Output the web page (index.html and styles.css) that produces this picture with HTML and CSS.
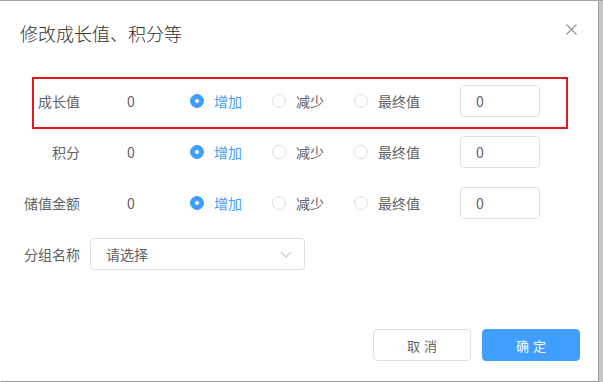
FILE: index.html
```html
<!DOCTYPE html>
<html lang="zh-CN">
<head>
<meta charset="utf-8">
<title>修改成长值、积分等</title>
<link rel="stylesheet" href="styles.css">
</head>
<body>
<div class="dialog">
  <div class="header">
    <span class="title">修改成长值、积分等</span>
    <span class="close">
      <svg width="11" height="11" viewBox="0 0 11 11"><path d="M0.5 0.5 L10.5 10.5 M10.5 0.5 L0.5 10.5" stroke="#909399" stroke-width="1.2" fill="none"/></svg>
    </span>
  </div>
  <div class="body">
    <div class="row">
      <div class="label">成长值</div>
      <div class="value">0</div>
      <div class="radios">
        <span class="radio checked"><span class="dot"></span><span class="rtext">增加</span></span>
        <span class="radio"><span class="dot"></span><span class="rtext">减少</span></span>
        <span class="radio"><span class="dot"></span><span class="rtext">最终值</span></span>
      </div>
      <div class="input">0</div>
    </div>
    <div class="row">
      <div class="label">积分</div>
      <div class="value">0</div>
      <div class="radios">
        <span class="radio checked"><span class="dot"></span><span class="rtext">增加</span></span>
        <span class="radio"><span class="dot"></span><span class="rtext">减少</span></span>
        <span class="radio"><span class="dot"></span><span class="rtext">最终值</span></span>
      </div>
      <div class="input">0</div>
    </div>
    <div class="row">
      <div class="label">储值金额</div>
      <div class="value">0</div>
      <div class="radios">
        <span class="radio checked"><span class="dot"></span><span class="rtext">增加</span></span>
        <span class="radio"><span class="dot"></span><span class="rtext">减少</span></span>
        <span class="radio"><span class="dot"></span><span class="rtext">最终值</span></span>
      </div>
      <div class="input">0</div>
    </div>
    <div class="row">
      <div class="label">分组名称</div>
      <div class="select">
        <span class="placeholder">请选择</span>
        <svg class="arrow" width="12" height="7" viewBox="0 0 12 7"><path d="M0.8 0.8 L6 6 L11.2 0.8" stroke="#c0c4cc" stroke-width="1.1" fill="none"/></svg>
      </div>
    </div>
  </div>
  <div class="footer">
    <button class="btn">取消</button>
    <button class="btn primary">确定</button>
  </div>
  <div class="highlight"></div>
</div>
</body>
</html>
```

FILE: styles.css
```css
html, body {
  margin: 0;
  padding: 0;
}
body {
  width: 603px;
  height: 382px;
  background: #c6c6c6;
  font-family: "Noto Sans CJK SC", "Microsoft YaHei", sans-serif;
  overflow: hidden;
  position: relative;
  border-top: 1px solid #a4a4a4;
  box-sizing: border-box;
}
.dialog {
  position: relative;
  width: 598px;
  height: 380px;
  background: #fff;
  box-shadow: 1px 1px 0 #9c9c9c;
  display: flex;
  flex-direction: column;
  box-sizing: border-box;
}
.header {
  display: flex;
  align-items: center;
  justify-content: space-between;
  padding: 20px 21px 0 20px;
  height: 24px;
}
.title {
  font-size: 18px;
  line-height: 24px;
  font-weight: 300;
  color: #303133;
}
.close {
  display: flex;
  width: 11px;
  height: 11px;
  margin-top: -8px;
}
.body {
  padding: 40px 0 0 0;
  display: flex;
  flex-direction: column;
  gap: 19px;
}
.row {
  display: flex;
  align-items: center;
  height: 32px;
  font-size: 14px;
  color: #606266;
}
.label {
  width: 80px;
  text-align: right;
  box-sizing: border-box;
}
.value {
  margin-left: 47px;
  width: 63px;
}
.radios {
  display: flex;
  align-items: center;
  width: 270px;
}
.radio {
  display: flex;
  align-items: center;
  margin-right: 30px;
}
.dot {
  width: 14px;
  height: 14px;
  border: 1px solid #dcdfe6;
  border-radius: 50%;
  box-sizing: border-box;
  background: #fff;
  margin-right: 10px;
  position: relative;
}
.radio.checked .dot {
  border-color: #409eff;
  background: #409eff;
}
.radio.checked .dot::after {
  content: "";
  position: absolute;
  left: 50%;
  top: 50%;
  width: 4px;
  height: 4px;
  margin: -2px 0 0 -2px;
  border-radius: 50%;
  background: #fff;
}
.radio.checked .rtext {
  color: #409eff;
}
.input {
  width: 80px;
  height: 32px;
  border: 1px solid #dcdfe6;
  border-radius: 4px;
  box-sizing: border-box;
  padding-left: 15px;
  display: flex;
  align-items: center;
  color: #606266;
}
.select {
  margin-left: 10px;
  width: 215px;
  height: 32px;
  border: 1px solid #dcdfe6;
  border-radius: 4px;
  box-sizing: border-box;
  display: flex;
  align-items: center;
  justify-content: space-between;
  padding: 0 12px 0 15px;
}
.placeholder {
  color: #606266;
}
.footer {
  margin-top: auto;
  display: flex;
  justify-content: flex-end;
  gap: 11px;
  padding: 0 18px 20px 0;
}
.btn {
  width: 98px;
  height: 32px;
  border: 1px solid #dcdfe6;
  border-radius: 4px;
  background: #fff;
  color: #606266;
  font-family: "Noto Sans CJK SC", sans-serif;
  font-size: 13px;
  letter-spacing: 4px;
  text-indent: 4px;
  padding: 0;
}
.btn.primary {
  background: #409eff;
  border-color: #409eff;
  color: #fff;
}
.highlight {
  position: absolute;
  left: 32px;
  top: 76px;
  width: 536px;
  height: 52px;
  border: 2px solid #e3161e;
  box-sizing: border-box;
}
```
